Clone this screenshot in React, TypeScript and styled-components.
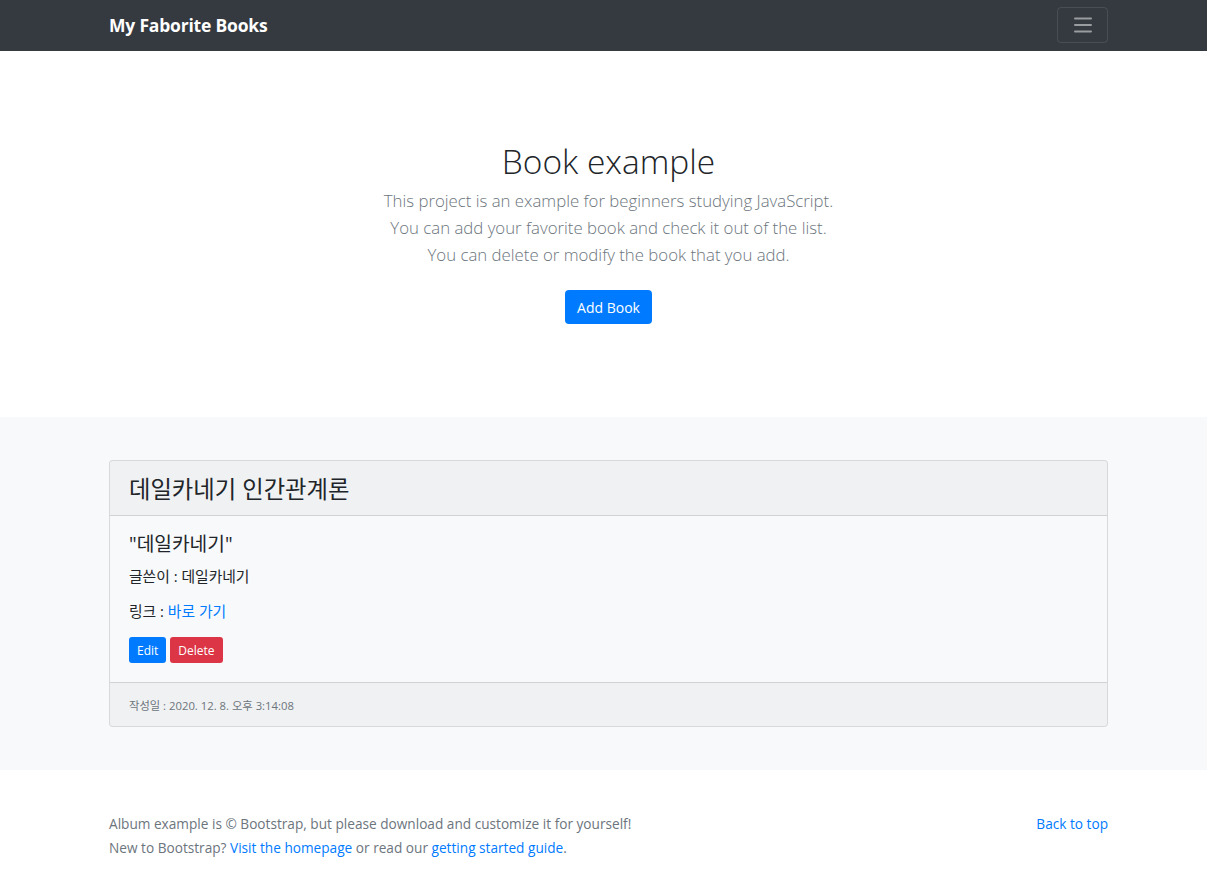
import React from "react";
import styled, { createGlobalStyle } from "styled-components";

const Global = createGlobalStyle`
  * { box-sizing: border-box; }
  body {
    margin: 0;
    font-family: "Open Sans", "Noto Sans CJK KR", sans-serif;
    color: #212529;
    background: #fff;
  }
  a { color: #007bff; text-decoration: none; }
`;

const Container = styled.div`
  width: 999px;
  margin-left: 109px;
`;

const NavBar = styled.header`
  background: #343a40;
  height: 51px;
`;

const NavInner = styled(Container)`
  height: 51px;
  display: flex;
  align-items: center;
  justify-content: space-between;
`;

const Brand = styled.a`
  color: #fff;
  font-weight: 700;
  font-size: 17.5px;
  letter-spacing: -0.2px;
  margin-top: -1px;
`;

const Toggler = styled.button`
  width: 51px;
  height: 36px;
  margin-top: -1px;
  border: 1px solid rgba(255, 255, 255, 0.1);
  border-radius: 4px;
  background: transparent;
  display: flex;
  align-items: center;
  justify-content: center;
  padding: 0;
`;

const Jumbo = styled.section`
  padding: 86px 0 93px;
`;

const JumboInner = styled(Container)`
  text-align: center;
`;

const Title = styled.h1`
  margin: 0 0 2px;
  font-weight: 300;
  font-size: 33.5px;
  line-height: 48px;
  color: #212529;
`;

const Lead = styled.p`
  margin: 0;
  font-weight: 300;
  font-size: 16.8px;
  line-height: 27px;
  color: #6c757d;
`;

const Button = styled.button<{ $variant?: "primary" | "danger"; $small?: boolean }>`
  border: none;
  border-radius: ${(p) => (p.$small ? "3px" : "4px")};
  background: ${(p) => (p.$variant === "danger" ? "#dc3545" : "#007bff")};
  color: #fff;
  font-family: "Open Sans", "Noto Sans CJK KR", sans-serif;
  font-size: ${(p) => (p.$small ? "12px" : "14px")};
  height: ${(p) => (p.$small ? "26px" : "34px")};
  padding: ${(p) => (p.$small ? "0 8px" : "0 12px")};
  cursor: pointer;
`;

const ButtonRow = styled.div<{ $gap?: number; $top?: number }>`
  display: flex;
  gap: ${(p) => p.$gap ?? 4}px;
  justify-content: ${(p) => (p.$gap ? "flex-start" : "center")};
  margin-top: ${(p) => p.$top ?? 0}px;
`;

const Album = styled.section`
  background: #f8f9fa;
  padding: 43px 0 43px;
`;

const Card = styled.div`
  border: 1px solid rgba(0, 0, 0, 0.125);
  border-radius: 4px;
  background: #f8f9fa;
  overflow: hidden;
`;

const CardHeader = styled.div`
  background: rgba(0, 0, 0, 0.03);
  border-bottom: 1px solid rgba(0, 0, 0, 0.125);
  height: 55px;
  padding: 0 19px;
  display: flex;
  align-items: center;
  font-size: 23.3px;
  color: #212529;
`;

const CardBody = styled.div`
  padding: 15px 19px 19px;
`;

const BookTitle = styled.h5`
  margin: 0 0 7.5px;
  font-size: 19.2px;
  font-weight: 400;
  line-height: 26px;
`;

const Info = styled.p`
  margin: 0 0 12px;
  font-size: 14.8px;
  line-height: 23px;
`;

const CardFooter = styled.div`
  background: rgba(0, 0, 0, 0.03);
  border-top: 1px solid rgba(0, 0, 0, 0.125);
  height: 44px;
  padding: 0 19px;
  display: flex;
  align-items: center;
  font-size: 11.3px;
  color: #6c757d;
`;

const Footer = styled.footer`
  padding: 42px 0 30px;
  color: #6c757d;
  font-size: 13.65px;
`;

const FooterInner = styled(Container)`
  display: flex;
  justify-content: space-between;
  align-items: flex-start;
`;

const FootLine = styled.p`
  margin: 0;
  line-height: 24px;
`;

export default function App() {
  return (
    <>
      <Global />
      <NavBar>
        <NavInner>
          <Brand href="#">My Faborite Books</Brand>
          <Toggler aria-label="menu">
            <svg width="30" height="30" viewBox="0 0 30 30">
              <path
                d="M7 8.5h16M7 15h16M7 21.5h16"
                stroke="rgba(255,255,255,0.5)"
                strokeWidth="2"
                strokeLinecap="round"
              />
            </svg>
          </Toggler>
        </NavInner>
      </NavBar>
      <Jumbo>
        <JumboInner>
          <Title>Book example</Title>
          <Lead>This project is an example for beginners studying JavaScript.</Lead>
          <Lead>You can add your favorite book and check it out of the list.</Lead>
          <Lead>You can delete or modify the book that you add.</Lead>
          <ButtonRow $top={22}>
            <Button>Add Book</Button>
          </ButtonRow>
        </JumboInner>
      </Jumbo>
      <Album>
        <Container>
          <Card>
            <CardHeader>데일카네기 인간관계론</CardHeader>
            <CardBody>
              <BookTitle>"데일카네기"</BookTitle>
              <Info>글쓴이 : 데일카네기</Info>
              <Info>
                링크 : <a href="#">바로 가기</a>
              </Info>
              <ButtonRow $gap={4} $top={14.5}>
                <Button $small>Edit</Button>
                <Button $small $variant="danger">Delete</Button>
              </ButtonRow>
            </CardBody>
            <CardFooter>작성일 : 2020. 12. 8. 오후 3:14:08</CardFooter>
          </Card>
        </Container>
      </Album>
      <Footer>
        <FooterInner>
          <div>
            <FootLine>Album example is © Bootstrap, but please download and customize it for yourself!</FootLine>
            <FootLine>
              New to Bootstrap? <a href="#">Visit the homepage</a> or read our{" "}
              <a href="#">getting started guide</a>.
            </FootLine>
          </div>
          <FootLine>
            <a href="#">Back to top</a>
          </FootLine>
        </FooterInner>
      </Footer>
    </>
  );
}
